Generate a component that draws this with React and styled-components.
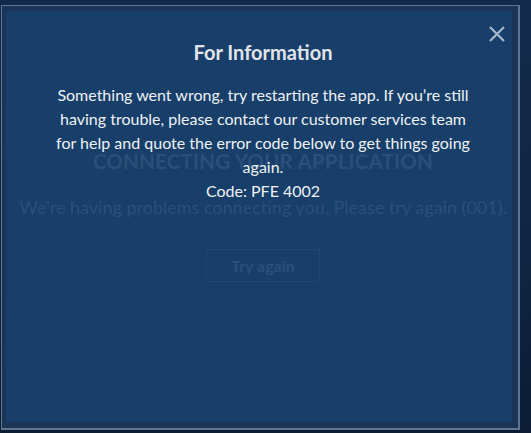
import React from "react";
import styled, { createGlobalStyle } from "styled-components";

const Global = createGlobalStyle`
  html, body { margin: 0; padding: 0; }
  body {
    width: 531px;
    height: 433px;
    overflow: hidden;
    background: linear-gradient(180deg, #132b4b 0%, #0f2541 60%, #0b1c33 100%);
    font-family: Lato, "Open Sans", sans-serif;
  }
`;

const Page = styled.div`
  padding: 5px 11px 3px 1px;
  height: 433px;
  box-sizing: border-box;
`;

const Frame = styled.div`
  height: 100%;
  box-sizing: border-box;
  border: 2px solid #5d7793;
  border-top-width: 1px;
  border-left-width: 1px;
  background: #1c3557;
  padding: 5px 6px 6px 4px;
`;

const Panel = styled.div`
  position: relative;
  height: 100%;
  background: #173f6a;
  overflow: hidden;
`;

const Behind = styled.div`
  display: flex;
  flex-direction: column;
  align-items: center;
  padding: 135px 0 0 8px;
  color: #2a5079;
`;

const BehindTitle = styled.div`
  font-weight: 700;
  font-size: 20.5px;
  line-height: 30px;
  letter-spacing: 0.2px;
`;

const BehindText = styled.div`
  font-size: 18px;
  line-height: 26px;
  margin-top: 18px;
  white-space: nowrap;
`;

const BehindButton = styled.div`
  margin-top: 29px;
  width: 114px;
  height: 33px;
  box-sizing: border-box;
  border: 1px solid #1f4772;
  display: flex;
  align-items: center;
  justify-content: center;
  font-weight: 700;
  font-size: 16px;
`;

const Dialog = styled.div`
  position: absolute;
  inset: 0;
  display: flex;
  flex-direction: column;
  align-items: center;
  padding: 29px 0 0 8px;
  color: #e4e8ed;
`;

const Title = styled.h2`
  margin: 0;
  font-size: 20px;
  font-weight: 700;
  line-height: 24px;
  color: #e1e5ea;
`;

const Body = styled.p`
  margin: 19px 0 0;
  width: 418px;
  text-align: center;
  font-size: 16px;
  line-height: 24px;
  color: #eef1f4;
`;

const Close = styled.button`
  position: absolute;
  top: 14px;
  right: 6px;
  width: 18px;
  height: 18px;
  padding: 0;
  border: 0;
  background: none;
  cursor: pointer;
  display: flex;
`;

export default function App() {
  return (
    <>
      <Global />
      <Page>
        <Frame>
          <Panel>
            <Behind>
              <BehindTitle>CONNECTING YOUR APPLICATION</BehindTitle>
              <BehindText>We're having problems connecting you. Please try again (001).</BehindText>
              <BehindButton>Try again</BehindButton>
            </Behind>
            <Dialog>
              <Title>For Information</Title>
              <Body>
                Something went wrong, try restarting the app. If you’re still having trouble, please contact our customer services team for help and quote the error code below to get things going again.
                <br />
                Code: PFE 4002
              </Body>
              <Close aria-label="Close">
                <svg width="18" height="18" viewBox="0 0 18 18">
                  <path d="M2 2 L16 16 M16 2 L2 16" stroke="#a7b8cb" strokeWidth="2.2" />
                </svg>
              </Close>
            </Dialog>
          </Panel>
        </Frame>
      </Page>
    </>
  );
}
